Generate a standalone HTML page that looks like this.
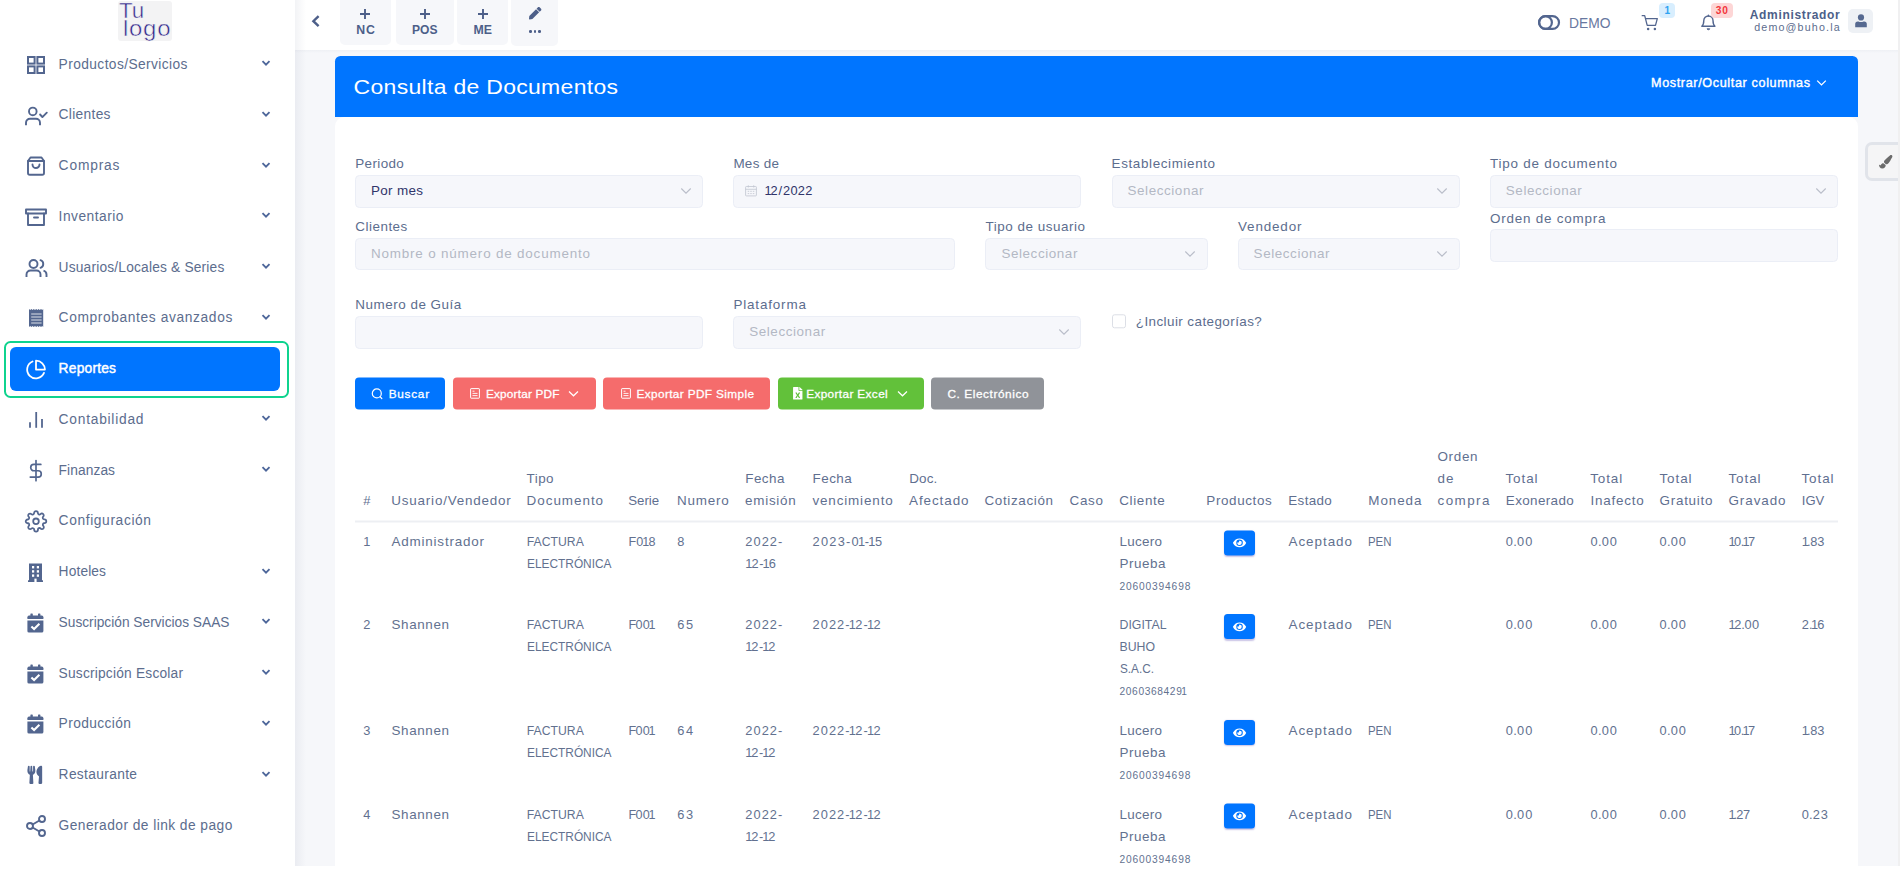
<!DOCTYPE html>
<html lang="es"><head><meta charset="utf-8"><title>Consulta de Documentos</title>
<style>
html,body{margin:0;padding:0;}
body{width:1900px;height:888px;overflow:hidden;background:#fff;font-family:"Liberation Sans",sans-serif;color:#5c6d8e;position:relative;}
.b{position:absolute;box-sizing:border-box;display:block;}
.t{position:absolute;white-space:nowrap;display:block;}
.inp{background:#f6f7fb;border:1px solid #ebeef6;border-radius:4.5px;}
.btn{border-radius:4px;}
.n i{font-style:normal;display:inline;}
svg{overflow:visible;}
</style></head>
<body>
<div class="b" style="left:295px;top:50px;width:1603px;height:816px;background:#f6f7fa;"></div>
<div class="b" style="left:295px;top:0px;width:1603px;height:50px;background:#fff;"></div>
<div class="b" style="left:295px;top:0px;width:11px;height:866px;background:linear-gradient(90deg,rgba(110,120,150,.085),rgba(110,120,150,0));"></div>
<div class="b" style="left:295px;top:50px;width:1603px;height:3px;background:linear-gradient(180deg,rgba(120,130,160,.06),rgba(120,130,160,0));"></div>
<div class="b" style="left:118px;top:1px;width:54px;height:40px;background:#f3f3f4;border-radius:3px;"></div>
<span class="t" style="left:119.00px;top:-4px;font-size:24px;line-height:28px;color:#30268a;-webkit-text-stroke:0.55px #f3f3f4;transform:scale(0.9330,0.9);transform-origin:0 22px;">Tu</span>
<span class="t" style="left:123.00px;top:14px;font-size:24px;line-height:28px;color:#30268a;letter-spacing:0.708px;-webkit-text-stroke:0.55px #f3f3f4;transform:scale(1.0000,0.9);transform-origin:0 22px;">logo</span>
<div class="b" style="left:4px;top:341px;width:285px;height:56.5px;border:2px solid #0fd38e;border-radius:6.5px;"></div>
<div class="b" style="left:10px;top:347px;width:270px;height:43.6px;background:#0075ff;border-radius:6px;"></div>
<svg class="b" style="left:24px;top:52.5px;" width="24" height="24" viewBox="0 0 24 24"><g fill="none" stroke="#53668f" stroke-width="2" stroke-linejoin="miter"><rect x="4" y="4" width="6.6" height="6.6"/><rect x="13.4" y="4" width="6.6" height="6.6"/><rect x="4" y="13.4" width="6.6" height="6.6"/><rect x="13.4" y="13.4" width="6.6" height="6.6"/></g></svg>
<span class="t" style="left:58.60px;top:55px;font-size:13.77px;line-height:20px;color:#5c6d8e;letter-spacing:0.403px;">Productos/Servicios</span>
<svg class="b" style="left:261px;top:59.2px;" width="10" height="8" viewBox="0 0 10 8"><path d="M1.500 2.200L5 5.700l3.500-3.500" fill="none" stroke="#4d669a" stroke-width="1.850"/></svg>
<svg class="b" style="left:24px;top:103.25px;" width="24" height="24" viewBox="0 0 24 24"><g fill="none" stroke="#53668f" stroke-width="1.9" stroke-linejoin="round"><circle cx="8.8" cy="8.45" r="3.8"/><path d="M2 22.2v-2.500a4 4 0 0 1 4-4h6a4 4 0 0 1 4 4v2.500"/><path d="M16.1 11.500l2.300 2.600 4.400-4.400" stroke-linecap="round"/></g></svg>
<span class="t" style="left:58.60px;top:105px;font-size:13.77px;line-height:20px;color:#5c6d8e;letter-spacing:0.310px;">Clientes</span>
<svg class="b" style="left:261px;top:109.95px;" width="10" height="8" viewBox="0 0 10 8"><path d="M1.500 2.200L5 5.700l3.500-3.500" fill="none" stroke="#4d669a" stroke-width="1.850"/></svg>
<svg class="b" style="left:24px;top:154.0px;" width="24" height="24" viewBox="0 0 24 24"><g fill="none" stroke="#53668f" stroke-width="1.9" stroke-linecap="round" stroke-linejoin="round"><path d="M6.5 3.5h11l2.5 3.5v12a1.8 1.8 0 0 1-1.8 1.8H5.8A1.8 1.8 0 0 1 4 19V7z"/><path d="M4 7h16"/><path d="M15.5 10.5a3.5 3.5 0 0 1-7 0"/></g></svg>
<span class="t" style="left:58.60px;top:156px;font-size:13.77px;line-height:20px;color:#5c6d8e;letter-spacing:0.843px;">Compras</span>
<svg class="b" style="left:261px;top:160.7px;" width="10" height="8" viewBox="0 0 10 8"><path d="M1.500 2.200L5 5.700l3.500-3.500" fill="none" stroke="#4d669a" stroke-width="1.850"/></svg>
<svg class="b" style="left:24px;top:204.75px;" width="24" height="24" viewBox="0 0 24 24"><g fill="none" stroke="#53668f" stroke-width="1.9" stroke-linecap="round" stroke-linejoin="round" stroke-linejoin="miter" stroke-linecap="butt"><path d="M2 4.5h20v4H2z"/><path d="M4 8.5V20h16V8.5"/><path d="M10 12.5h4"/></g></svg>
<span class="t" style="left:58.60px;top:207px;font-size:13.77px;line-height:20px;color:#5c6d8e;letter-spacing:0.494px;">Inventario</span>
<svg class="b" style="left:261px;top:211.45px;" width="10" height="8" viewBox="0 0 10 8"><path d="M1.500 2.200L5 5.700l3.500-3.500" fill="none" stroke="#4d669a" stroke-width="1.850"/></svg>
<svg class="b" style="left:24px;top:255.5px;" width="24" height="24" viewBox="0 0 24 24"><g fill="none" stroke="#53668f" stroke-width="1.9" stroke-linecap="round" stroke-linejoin="round"><circle cx="9.5" cy="8" r="4"/><path d="M2.5 21v-2.5a4 4 0 0 1 4-4h6a4 4 0 0 1 4 4V21" stroke-linecap="butt"/><path d="M16.5 4.2a4 4 0 0 1 0 7.6"/><path d="M22.5 21v-2.5a4 4 0 0 0-3-3.8" stroke-linecap="butt"/></g></svg>
<span class="t" style="left:58.60px;top:258px;font-size:13.77px;line-height:20px;color:#5c6d8e;letter-spacing:0.178px;">Usuarios/Locales &amp; Series</span>
<svg class="b" style="left:261px;top:262.2px;" width="10" height="8" viewBox="0 0 10 8"><path d="M1.500 2.200L5 5.700l3.500-3.500" fill="none" stroke="#4d669a" stroke-width="1.850"/></svg>
<svg class="b" style="left:24px;top:306.25px;" width="24" height="24" viewBox="0 0 24 24"><g fill="#53668f"><path d="M5 3l1.2 1 1.2-1 1.2 1 1.2-1 1.2 1 1.2-1 1.2 1 1.2-1 1.2 1 1.2-1 1.2 1 1-1v18l-1-1-1.2 1-1.2-1-1.2 1-1.2-1-1.2 1-1.2-1-1.2 1-1.2-1-1.2 1-1.2-1L5 21z"/></g><g stroke="#fff" stroke-width="1" opacity=".8"><path d="M7.2 8h10.4M7.2 11h10.4M7.2 14h10.4M7.2 17h10.4"/></g></svg>
<span class="t" style="left:58.60px;top:308px;font-size:13.77px;line-height:20px;color:#5c6d8e;letter-spacing:0.619px;">Comprobantes avanzados</span>
<svg class="b" style="left:261px;top:312.95px;" width="10" height="8" viewBox="0 0 10 8"><path d="M1.500 2.200L5 5.700l3.500-3.500" fill="none" stroke="#4d669a" stroke-width="1.850"/></svg>
<svg class="b" style="left:24px;top:357.0px;" width="24" height="24" viewBox="0 0 24 24"><g fill="none" stroke="#fff" stroke-width="1.9" stroke-linecap="round" stroke-linejoin="round" transform="translate(12 12.600) scale(.94) translate(-12 -12)"><path d="M20.500 15.500A9.300 9.300 0 1 1 8.300 3.400"/><path d="M21.500 12A9.500 9.500 0 0 0 12 2.500V12z"/></g></svg>
<span class="t" style="left:58.60px;top:359px;font-size:13.77px;line-height:20px;color:#fff;letter-spacing:0.221px;-webkit-text-stroke:0.45px #fff;">Reportes</span>
<svg class="b" style="left:24px;top:407.75px;" width="24" height="24" viewBox="0 0 24 24"><g fill="none" stroke="#53668f" stroke-width="1.8"><path d="M12.200 19.800V4"/><path d="M18 19.800V11"/><path d="M6 19.800v-5.600"/></g></svg>
<span class="t" style="left:58.60px;top:410px;font-size:13.77px;line-height:20px;color:#5c6d8e;letter-spacing:0.761px;">Contabilidad</span>
<svg class="b" style="left:261px;top:414.45px;" width="10" height="8" viewBox="0 0 10 8"><path d="M1.500 2.200L5 5.700l3.500-3.500" fill="none" stroke="#4d669a" stroke-width="1.850"/></svg>
<svg class="b" style="left:24px;top:458.5px;" width="24" height="24" viewBox="0 0 24 24"><g fill="none" stroke="#53668f" stroke-width="1.9" stroke-linecap="round" stroke-linejoin="round" stroke-linecap="butt" stroke-width="2.200" transform="translate(12 11.600) scale(.88) translate(-12 -12)"><path d="M12 0.500v23"/><path d="M17.500 5H9.600a3.600 3.600 0 0 0 0 7.200h4.800a3.600 3.600 0 0 1 0 7.200H5.500"/></g></svg>
<span class="t" style="left:58.60px;top:461px;font-size:13.77px;line-height:20px;color:#5c6d8e;letter-spacing:0.078px;">Finanzas</span>
<svg class="b" style="left:261px;top:465.2px;" width="10" height="8" viewBox="0 0 10 8"><path d="M1.500 2.200L5 5.700l3.500-3.500" fill="none" stroke="#4d669a" stroke-width="1.850"/></svg>
<svg class="b" style="left:24px;top:509.25px;" width="24" height="24" viewBox="0 0 24 24"><g fill="none" stroke="#53668f" stroke-width="1.9" stroke-linecap="round" stroke-linejoin="round" stroke-width="2.100" transform="translate(12 12.300) scale(.935) translate(-12 -12)"><circle cx="12" cy="12" r="3"/><path d="M19.4 15a1.65 1.65 0 0 0 .33 1.82l.06.06a2 2 0 0 1 0 2.83 2 2 0 0 1-2.83 0l-.06-.06a1.65 1.65 0 0 0-1.82-.33 1.65 1.65 0 0 0-1 1.51V21a2 2 0 0 1-2 2 2 2 0 0 1-2-2v-.09A1.65 1.65 0 0 0 9 19.4a1.65 1.65 0 0 0-1.82.33l-.06.06a2 2 0 0 1-2.83 0 2 2 0 0 1 0-2.83l.06-.06a1.65 1.65 0 0 0 .33-1.82 1.65 1.65 0 0 0-1.51-1H3a2 2 0 0 1-2-2 2 2 0 0 1 2-2h.09A1.65 1.65 0 0 0 4.6 9a1.65 1.65 0 0 0-.33-1.82l-.06-.06a2 2 0 0 1 0-2.83 2 2 0 0 1 2.83 0l.06.06a1.65 1.65 0 0 0 1.82.33H9a1.65 1.65 0 0 0 1-1.51V3a2 2 0 0 1 2-2 2 2 0 0 1 2 2v.09a1.65 1.65 0 0 0 1 1.51 1.65 1.65 0 0 0 1.82-.33l.06-.06a2 2 0 0 1 2.83 0 2 2 0 0 1 0 2.83l-.06.06a1.65 1.65 0 0 0-.33 1.82V9a1.65 1.65 0 0 0 1.51 1H21a2 2 0 0 1 2 2 2 2 0 0 1-2 2h-.09a1.65 1.65 0 0 0-1.51 1z"/></g></svg>
<span class="t" style="left:58.60px;top:511px;font-size:13.77px;line-height:20px;color:#5c6d8e;letter-spacing:0.622px;">Configuración</span>
<svg class="b" style="left:24px;top:560.0px;" width="24" height="24" viewBox="0 0 24 24"><g fill="#53668f"><path d="M4 20.2h1V3.5h13v16.7h1V22H4z"/></g><g fill="#fff"><rect x="8" y="6" width="2.2" height="2.4"/><rect x="12.8" y="6" width="2.2" height="2.4"/><rect x="8" y="10.2" width="2.2" height="2.4"/><rect x="12.8" y="10.2" width="2.2" height="2.4"/><rect x="8" y="14.4" width="2.2" height="2.4"/><rect x="12.8" y="14.4" width="2.2" height="2.4"/><rect x="10.4" y="18.6" width="2.2" height="3.4"/></g></svg>
<span class="t" style="left:58.60px;top:562px;font-size:13.77px;line-height:20px;color:#5c6d8e;letter-spacing:0.121px;">Hoteles</span>
<svg class="b" style="left:261px;top:566.7px;" width="10" height="8" viewBox="0 0 10 8"><path d="M1.500 2.200L5 5.700l3.500-3.500" fill="none" stroke="#4d669a" stroke-width="1.850"/></svg>
<svg class="b" style="left:24px;top:610.75px;" width="24" height="24" viewBox="0 0 24 24"><g transform="translate(-.6 0)"><g fill="#53668f"><path d="M4 9.6h16V20a1.6 1.6 0 0 1-1.6 1.6H5.6A1.6 1.6 0 0 1 4 20z"/><path d="M5.6 4.6h12.8A1.6 1.6 0 0 1 20 6.2v1.9H4V6.2a1.6 1.6 0 0 1 1.6-1.6z"/><rect x="7" y="2.4" width="2.4" height="4" rx=".6"/><rect x="14.6" y="2.4" width="2.4" height="4" rx=".6"/></g><path d="M8 15.4l2.7 2.7 5.3-5.3" fill="none" stroke="#fff" stroke-width="2.1"/></g></svg>
<span class="t" style="left:58.60px;top:613px;font-size:13.73px;line-height:20px;color:#5c6d8e;letter-spacing:0.004px;">Suscripción Servicios SAAS</span>
<svg class="b" style="left:261px;top:617.45px;" width="10" height="8" viewBox="0 0 10 8"><path d="M1.500 2.200L5 5.700l3.500-3.500" fill="none" stroke="#4d669a" stroke-width="1.850"/></svg>
<svg class="b" style="left:24px;top:661.5px;" width="24" height="24" viewBox="0 0 24 24"><g transform="translate(-.6 0)"><g fill="#53668f"><path d="M4 9.6h16V20a1.6 1.6 0 0 1-1.6 1.6H5.6A1.6 1.6 0 0 1 4 20z"/><path d="M5.6 4.6h12.8A1.6 1.6 0 0 1 20 6.2v1.9H4V6.2a1.6 1.6 0 0 1 1.6-1.6z"/><rect x="7" y="2.4" width="2.4" height="4" rx=".6"/><rect x="14.6" y="2.4" width="2.4" height="4" rx=".6"/></g><path d="M8 15.4l2.7 2.7 5.3-5.3" fill="none" stroke="#fff" stroke-width="2.1"/></g></svg>
<span class="t" style="left:58.60px;top:664px;font-size:13.77px;line-height:20px;color:#5c6d8e;letter-spacing:0.196px;">Suscripción Escolar</span>
<svg class="b" style="left:261px;top:668.2px;" width="10" height="8" viewBox="0 0 10 8"><path d="M1.500 2.200L5 5.700l3.500-3.500" fill="none" stroke="#4d669a" stroke-width="1.850"/></svg>
<svg class="b" style="left:24px;top:712.25px;" width="24" height="24" viewBox="0 0 24 24"><g transform="translate(-.6 0)"><g fill="#53668f"><path d="M4 9.6h16V20a1.6 1.6 0 0 1-1.6 1.6H5.6A1.6 1.6 0 0 1 4 20z"/><path d="M5.6 4.6h12.8A1.6 1.6 0 0 1 20 6.2v1.9H4V6.2a1.6 1.6 0 0 1 1.6-1.6z"/><rect x="7" y="2.4" width="2.4" height="4" rx=".6"/><rect x="14.6" y="2.4" width="2.4" height="4" rx=".6"/></g><path d="M8 15.4l2.7 2.7 5.3-5.3" fill="none" stroke="#fff" stroke-width="2.1"/></g></svg>
<span class="t" style="left:58.60px;top:714px;font-size:13.77px;line-height:20px;color:#5c6d8e;letter-spacing:0.392px;">Producción</span>
<svg class="b" style="left:261px;top:718.95px;" width="10" height="8" viewBox="0 0 10 8"><path d="M1.500 2.200L5 5.700l3.500-3.500" fill="none" stroke="#4d669a" stroke-width="1.850"/></svg>
<svg class="b" style="left:24px;top:763.0px;" width="24" height="24" viewBox="0 0 24 24"><g transform="translate(3.400 2.800) scale(.0355)"><path fill="#53668f" d="M207.9 15.2c.8 4.7 16.1 94.5 16.1 128.8 0 52.3-27.8 89.6-68.900 104.600L168 486.700c.7 13.700-10.200 25.300-24 25.300H80c-13.700 0-24.700-11.500-24-25.300l12.900-238.100C27.700 233.600 0 196.200 0 144 0 109.600 15.300 19.900 16.100 15.200 19.300-5.100 61.400-5.400 64 16.300v141.200c1.300 3.400 15.100 3.200 16 0 1.400-25.300 7.900-139.200 8-141.800 3.300-20.800 44.700-20.800 47.900 0 .2 2.700 6.600 116.500 8 141.800.9 3.200 14.800 3.400 16 0V16.300c2.600-21.600 44.800-21.400 48-1.100zm119.200 285.700l-15 185.100c-1.200 14 9.900 26 23.900 26h56c13.300 0 24-10.700 24-24V24c0-13.200-10.700-24-24-24-82.500 0-221.400 178.500-64.900 300.900z"/></g></svg>
<span class="t" style="left:58.60px;top:765px;font-size:13.77px;line-height:20px;color:#5c6d8e;letter-spacing:0.341px;">Restaurante</span>
<svg class="b" style="left:261px;top:769.7px;" width="10" height="8" viewBox="0 0 10 8"><path d="M1.500 2.200L5 5.700l3.500-3.500" fill="none" stroke="#4d669a" stroke-width="1.850"/></svg>
<svg class="b" style="left:24px;top:813.75px;" width="24" height="24" viewBox="0 0 24 24"><g fill="none" stroke="#53668f" stroke-width="1.9" stroke-linecap="round" stroke-linejoin="round"><circle cx="18" cy="5" r="3"/><circle cx="6" cy="12" r="3"/><circle cx="18" cy="19" r="3"/><path d="M8.6 13.5l6.8 4M15.4 6.5l-6.8 4"/></g></svg>
<span class="t" style="left:58.60px;top:816px;font-size:13.77px;line-height:20px;color:#5c6d8e;letter-spacing:0.445px;">Generador de link de pago</span>
<svg class="b" style="left:310px;top:14px;" width="12" height="14" viewBox="0 0 12 14"><path d="M8.6 2.2L3.4 7.2l5.2 5" fill="none" stroke="#4d5f89" stroke-width="2.4"/></svg>
<div class="b" style="left:340px;top:0px;width:50.75px;height:45px;background:#f6f7fa;border-radius:0 0 5px 5px;"></div>
<svg class="b" style="left:359.375px;top:7.75px;" width="12" height="12" viewBox="0 0 12 12"><path d="M6 1v10M1 6h10" fill="none" stroke="#4d5f89" stroke-width="1.9"/></svg>
<span class="t" style="left:356.20px;top:22px;font-size:12.3px;line-height:16px;font-weight:700;color:#4d5f89;letter-spacing:1.039px;">NC</span>
<div class="b" style="left:396px;top:0px;width:57.75px;height:45px;background:#f6f7fa;border-radius:0 0 5px 5px;"></div>
<svg class="b" style="left:418.875px;top:7.75px;" width="12" height="12" viewBox="0 0 12 12"><path d="M6 1v10M1 6h10" fill="none" stroke="#4d5f89" stroke-width="1.9"/></svg>
<span class="t" style="left:412.00px;top:22px;font-size:12.3px;line-height:16px;font-weight:700;color:#4d5f89;transform:scaleX(0.9819);transform-origin:0 50%;">POS</span>
<div class="b" style="left:457.2px;top:0px;width:50.80000000000001px;height:45px;background:#f6f7fa;border-radius:0 0 5px 5px;"></div>
<svg class="b" style="left:476.6px;top:7.75px;" width="12" height="12" viewBox="0 0 12 12"><path d="M6 1v10M1 6h10" fill="none" stroke="#4d5f89" stroke-width="1.9"/></svg>
<span class="t" style="left:473.50px;top:22px;font-size:12.3px;line-height:16px;font-weight:700;color:#4d5f89;letter-spacing:0.055px;">ME</span>
<div class="b" style="left:511.2px;top:0px;width:46.6px;height:45.5px;background:#f6f7fa;border-radius:0 0 5px 5px;"></div>
<svg class="b" style="left:528.8px;top:7.3px;" width="12.4" height="12.4" viewBox="0 0 512 512"><path fill="#4d5f89" d="M290.7 93.2l128 128L140.8 499.300 26.700 511.900c-15.300 1.700-28.200-11.200-26.500-26.500l12.700-114.200zm207.200-19.100l-60.100-60.100c-18.750-18.750-49.160-18.750-67.910 0l-56.550 56.550 128.020 128.020 56.550-56.550c18.750-18.760 18.750-49.160 0-67.920z"/></svg>
<div class="b" style="left:529.2px;top:30.2px;width:2.7px;height:2.7px;background:#4d5f89;border-radius:50%;"></div>
<div class="b" style="left:533.6px;top:30.2px;width:2.7px;height:2.7px;background:#4d5f89;border-radius:50%;"></div>
<div class="b" style="left:538.0px;top:30.2px;width:2.7px;height:2.7px;background:#4d5f89;border-radius:50%;"></div>
<svg class="b" style="left:1538px;top:15px;" width="23" height="15" viewBox="0 0 23 15"><rect x="1.1" y="1.1" width="19.9" height="12.8" rx="6.4" fill="none" stroke="#53668f" stroke-width="2.2"/><circle cx="7.500" cy="7.500" r="6.4" fill="none" stroke="#53668f" stroke-width="2.2"/></svg>
<span class="t" style="left:1569.20px;top:13px;font-size:14.6px;line-height:20px;color:#6878a0;transform:scaleX(0.9479);transform-origin:0 50%;">DEMO</span>
<svg class="b" style="left:1641px;top:14px;" width="19" height="18" viewBox="0 0 19 18"><g fill="none" stroke="#53668f" stroke-width="1.3" stroke-linejoin="round" stroke-linecap="round"><path d="M1.200 1.700h2.500l2.500 9.600h8.300l1.800-6.700H4.600"/></g><circle cx="7.100" cy="15" r="1.250" fill="#53668f"/><circle cx="13.900" cy="15" r="1.250" fill="#53668f"/></svg>
<div class="b" style="left:1659px;top:3px;width:16px;height:15px;background:#d8eefe;border-radius:4px;"></div>
<span class="t" style="left:1664.60px;top:5px;font-size:10px;line-height:12px;font-weight:700;color:#2fa2f2;">1</span>
<svg class="b" style="left:1700px;top:14px;" width="17" height="18" viewBox="0 0 17 18"><g fill="none" stroke="#53668f" stroke-width="1.400" stroke-linejoin="round" stroke-linecap="round"><path d="M8.400 2a4.600 4.600 0 0 1 4.600 4.600c0 4.100 2 5.600 2 5.600H1.800s2-1.500 2-5.600A4.600 4.600 0 0 1 8.400 2z"/><path d="M8.400 2V1.200"/></g><path d="M7 14.800a1.500 1.500 0 0 0 2.800 0z" fill="#53668f" stroke="#53668f" stroke-width=".9"/></svg>
<div class="b" style="left:1711px;top:3px;width:22px;height:15px;background:#fdd6d6;border-radius:4px;"></div>
<span class="t" style="left:1715.80px;top:5px;font-size:10.2px;line-height:12px;font-weight:700;color:#f2363c;letter-spacing:0.668px;">30</span>
<span class="t" style="left:1749.80px;top:7px;font-size:12px;line-height:16px;font-weight:700;color:#4d5f89;letter-spacing:0.658px;">Administrador</span>
<span class="t" style="left:1754.20px;top:20px;font-size:10.7px;line-height:14px;color:#5c6d8e;letter-spacing:1.168px;">demo@buho.la</span>
<div class="b" style="left:1848px;top:9px;width:25px;height:24px;background:#eef1f5;border-radius:5px;"></div>
<svg class="b" style="left:1854.5px;top:13.5px;" width="12" height="13.5" viewBox="0 0 12 13.5"><circle cx="6" cy="3.400" r="3.100" fill="#566990"/><path d="M0.200 13.300v-3.300a2.600 2.600 0 0 1 2.600-2.600h.6c.8.400 1.700.600 2.600.600s1.800-.2 2.600-.6h.6a2.600 2.600 0 0 1 2.600 2.600v3.300z" fill="#566990"/></svg>
<div class="b" style="left:335px;top:56px;width:1523px;height:61px;background:#0075ff;border-radius:5.5px 5.5px 0 0;"></div>
<span class="t" style="left:353.60px;top:71px;font-size:23px;line-height:30px;color:#fff;letter-spacing:0.293px;transform:scale(1.0000,0.915);transform-origin:0 23px;">Consulta de Documentos</span>
<span class="t" style="left:1651.00px;top:75px;font-size:12.63px;line-height:16px;color:#fff;letter-spacing:0.629px;-webkit-text-stroke:0.4px #fff;">Mostrar/Ocultar columnas</span>
<svg class="b" style="left:1816px;top:79px;" width="11" height="8" viewBox="0 0 11 8"><path d="M1.200 1.600L5.500 5.900l4.300-4.300" fill="none" stroke="#fff" stroke-width="1.300"/></svg>
<div class="b" style="left:335px;top:117px;width:1523px;height:749px;background:#fff;border-radius:9.5px 9.5px 0 0;"></div>
<div class="b" style="left:1865px;top:142px;width:33px;height:39px;background:#f5f5f6;border:3px solid #e1e4ea;border-right:0;border-radius:7px 0 0 7px;"></div>
<svg class="b" style="left:1878.8px;top:154.5px;" width="13.4" height="13.6" viewBox="0 0 512 512"><path fill="#6b6b6b" d="M167.020 309.340c-40.120 2.580-76.530 17.860-97.190 72.300-2.350 6.210-8 9.980-14.590 9.980-11.110 0-45.460-27.670-55.250-34.350C0 439.620 37.930 512 128 512c75.860 0 128-43.770 128-120.190 0-3.110-.65-6.080-.97-9.130l-88.010-73.340zM457.890 0c-15.160 0-29.370 6.710-40.210 16.450C213.270 199.050 192 203.340 192 257.090c0 13.700 3.250 26.760 8.730 38.700l63.820 53.180c7.210 1.800 14.640 3.030 22.390 3.030 62.110 0 98.110-45.470 211.160-256.460 7.380-14.350 13.900-29.850 13.900-45.990C512 20.640 486 0 457.890 0z"/></svg>
<span class="t" style="left:355.30px;top:155px;font-size:13.45px;line-height:18px;color:#5c6d8e;letter-spacing:0.364px;">Periodo</span>
<div class="b inp" style="left:355px;top:175px;width:348.2px;height:33px;"></div>
<span class="t" style="left:371.00px;top:182px;font-size:13.45px;line-height:18px;color:#30356a;letter-spacing:0.328px;">Por mes</span>
<svg class="b" style="left:679.7px;top:187px;" width="12" height="8" viewBox="0 0 12 8"><path d="M1.300 1.500L6 6.200l4.700-4.700" fill="none" stroke="#b9bdc9" stroke-width="1.100"/></svg>
<span class="t" style="left:733.40px;top:155px;font-size:13.45px;line-height:18px;color:#5c6d8e;letter-spacing:0.287px;">Mes de</span>
<div class="b inp" style="left:733.2px;top:175px;width:348.3px;height:33px;"></div>
<svg class="b" style="left:744.8px;top:184.9px;" width="12" height="11.5" viewBox="0 0 12 11.500"><g fill="none" stroke="#c3c7d2" stroke-width=".85"><rect x=".6" y="1.500" width="10.800" height="9.400" rx=".7"/><path d="M.6 4.300h10.800M3.300 .3v2.200M8.700 .3v2.200"/></g><g fill="#cfd2db"><rect x="2.700" y="5.800" width="1.500" height="1.100"/><rect x="5.250" y="5.800" width="1.500" height="1.100"/><rect x="7.800" y="5.800" width="1.500" height="1.100"/><rect x="2.700" y="8" width="1.500" height="1.100"/><rect x="5.250" y="8" width="1.500" height="1.100"/><rect x="7.800" y="8" width="1.500" height="1.100"/></g></svg>
<span class="t n" style="left:765.99px;top:182px;font-size:12.8px;line-height:18px;color:#30356a;"><i style="margin:0 -1.39px">1</i><i style="margin:0 0.15px">2</i><i style="margin:0 0.78px">/</i><i style="margin:0 0.15px">2</i><i style="margin:0 0.15px">0</i><i style="margin:0 0.15px">2</i><i style="margin:0 0.15px">2</i></span>
<span class="t" style="left:1111.60px;top:155px;font-size:13.45px;line-height:18px;color:#5c6d8e;letter-spacing:0.617px;">Establecimiento</span>
<div class="b inp" style="left:1111.5px;top:175px;width:348.2px;height:33px;"></div>
<span class="t" style="left:1127.50px;top:182px;font-size:13.45px;line-height:18px;color:#b3b8c4;letter-spacing:0.579px;">Seleccionar</span>
<svg class="b" style="left:1436.2px;top:187px;" width="12" height="8" viewBox="0 0 12 8"><path d="M1.300 1.500L6 6.200l4.700-4.700" fill="none" stroke="#b9bdc9" stroke-width="1.100"/></svg>
<span class="t" style="left:1490.00px;top:155px;font-size:13.45px;line-height:18px;color:#5c6d8e;letter-spacing:0.779px;">Tipo de documento</span>
<div class="b inp" style="left:1489.8px;top:175px;width:348.2px;height:33px;"></div>
<span class="t" style="left:1505.80px;top:182px;font-size:13.45px;line-height:18px;color:#b3b8c4;letter-spacing:0.579px;">Seleccionar</span>
<svg class="b" style="left:1814.5px;top:187px;" width="12" height="8" viewBox="0 0 12 8"><path d="M1.300 1.500L6 6.200l4.700-4.700" fill="none" stroke="#b9bdc9" stroke-width="1.100"/></svg>
<span class="t" style="left:355.30px;top:218px;font-size:13.45px;line-height:18px;color:#5c6d8e;letter-spacing:0.493px;">Clientes</span>
<div class="b inp" style="left:355px;top:238px;width:600px;height:32px;"></div>
<span class="t" style="left:371.00px;top:245px;font-size:13.45px;line-height:18px;color:#b3b8c4;letter-spacing:0.808px;">Nombre o número de documento</span>
<span class="t" style="left:985.60px;top:218px;font-size:13.45px;line-height:18px;color:#5c6d8e;letter-spacing:0.527px;">Tipo de usuario</span>
<div class="b inp" style="left:985.4px;top:238px;width:222.2px;height:32px;"></div>
<span class="t" style="left:1001.40px;top:245px;font-size:13.45px;line-height:18px;color:#b3b8c4;letter-spacing:0.579px;">Seleccionar</span>
<svg class="b" style="left:1184.1px;top:250px;" width="12" height="8" viewBox="0 0 12 8"><path d="M1.300 1.500L6 6.200l4.700-4.700" fill="none" stroke="#b9bdc9" stroke-width="1.100"/></svg>
<span class="t" style="left:1238.00px;top:218px;font-size:13.45px;line-height:18px;color:#5c6d8e;letter-spacing:0.852px;">Vendedor</span>
<div class="b inp" style="left:1237.6px;top:238px;width:222.2px;height:32px;"></div>
<span class="t" style="left:1253.60px;top:245px;font-size:13.45px;line-height:18px;color:#b3b8c4;letter-spacing:0.579px;">Seleccionar</span>
<svg class="b" style="left:1436.3px;top:250px;" width="12" height="8" viewBox="0 0 12 8"><path d="M1.300 1.500L6 6.200l4.700-4.700" fill="none" stroke="#b9bdc9" stroke-width="1.100"/></svg>
<span class="t" style="left:1490.00px;top:210px;font-size:13.45px;line-height:18px;color:#5c6d8e;letter-spacing:0.781px;">Orden de compra</span>
<div class="b inp" style="left:1489.8px;top:229px;width:348.2px;height:33px;"></div>
<span class="t" style="left:355.30px;top:296px;font-size:13.45px;line-height:18px;color:#5c6d8e;letter-spacing:0.512px;">Numero de Guía</span>
<div class="b inp" style="left:355px;top:316px;width:348.2px;height:33px;"></div>
<span class="t" style="left:733.40px;top:296px;font-size:13.45px;line-height:18px;color:#5c6d8e;letter-spacing:0.836px;">Plataforma</span>
<div class="b inp" style="left:733.2px;top:316px;width:348.3px;height:33px;"></div>
<span class="t" style="left:749.20px;top:323px;font-size:13.45px;line-height:18px;color:#b3b8c4;letter-spacing:0.579px;">Seleccionar</span>
<svg class="b" style="left:1058.0px;top:328px;" width="12" height="8" viewBox="0 0 12 8"><path d="M1.300 1.500L6 6.200l4.700-4.700" fill="none" stroke="#b9bdc9" stroke-width="1.100"/></svg>
<div class="b" style="left:1112px;top:314px;width:14px;height:14px;background:#fff;border:1px solid #dcdfe6;border-radius:2.5px;transform:translateY(.3px);"></div>
<span class="t" style="left:1135.80px;top:313px;font-size:13.45px;line-height:18px;color:#5c6d8e;letter-spacing:0.421px;">¿Incluir categorías?</span>
<div class="b btn" style="left:355.2px;top:377px;width:89.8px;height:32.2px;background:#0075ff;transform:translateY(.5px);"></div>
<svg class="b" style="left:371px;top:388px;" width="12" height="12" viewBox="0 0 12 12"><g fill="none" stroke="#fff" stroke-width="1.200"><circle cx="5.800" cy="5.400" r="4.500"/><path d="M9 8.700l1.800 1.800" stroke-linecap="round"/></g></svg>
<span class="t" style="left:388.70px;top:386px;font-size:11.8px;line-height:16px;color:#fff;letter-spacing:0.737px;-webkit-text-stroke:0.3px #fff;">Buscar</span>
<div class="b btn" style="left:453px;top:377px;width:143px;height:32.2px;background:#f56c6c;transform:translateY(.5px);"></div>
<svg class="b" style="left:470px;top:388.2px;" width="10" height="11" viewBox="0 0 10 11"><g fill="none" stroke="#fff" stroke-width="1"><rect x=".6" y=".6" width="8.800" height="9.600" rx=".5"/><path d="M2.500 3.200h2M2.500 5.400h5M2.500 7.600h5" stroke-width=".9"/></g></svg>
<span class="t" style="left:486.00px;top:386px;font-size:11.8px;line-height:16px;color:#fff;letter-spacing:0.177px;-webkit-text-stroke:0.3px #fff;">Exportar PDF</span>
<svg class="b" style="left:568.2px;top:389.8px;" width="11" height="8" viewBox="0 0 11 8"><path d="M1 1.500L5.500 5.800l4.500-4.300" fill="none" stroke="#fff" stroke-width="1.200"/></svg>
<div class="b btn" style="left:603px;top:377px;width:166.7px;height:32.2px;background:#f56c6c;transform:translateY(.5px);"></div>
<svg class="b" style="left:620.5px;top:388.2px;" width="10" height="11" viewBox="0 0 10 11"><g fill="none" stroke="#fff" stroke-width="1"><rect x=".6" y=".6" width="8.800" height="9.600" rx=".5"/><path d="M2.500 3.200h2M2.500 5.400h5M2.500 7.600h5" stroke-width=".9"/></g></svg>
<span class="t" style="left:636.50px;top:386px;font-size:11.8px;line-height:16px;color:#fff;letter-spacing:0.373px;-webkit-text-stroke:0.3px #fff;">Exportar PDF Simple</span>
<div class="b btn" style="left:778px;top:377px;width:145.7px;height:32.2px;background:#62c13a;transform:translateY(.5px);"></div>
<svg class="b" style="left:792.8px;top:387.2px;" width="9.5" height="12.5" viewBox="0 0 384 512"><path fill="#fff" d="M224 136V0H24C10.700 0 0 10.700 0 24v464c0 13.300 10.700 24 24 24h336c13.300 0 24-10.700 24-24V160H248c-13.200 0-24-10.800-24-24zm60.100 106.500L224 336l60.100 93.500c5.100 8-.6 18.500-10.100 18.500h-34.900c-4.400 0-8.500-2.400-10.600-6.300C208.900 405.500 192 373 192 373c-6.400 14.800-10 20-36.600 68.800-2.100 3.900-6.100 6.300-10.500 6.300H110c-9.500 0-15.200-10.500-10.100-18.500l60.300-93.500-60.300-93.500c-5.200-8 .6-18.500 10.100-18.500h34.800c4.400 0 8.500 2.400 10.600 6.300 26.100 48.800 20 33.600 36.600 68.500 0 0 6.100-11.700 36.600-68.500 2.100-3.900 6.200-6.300 10.600-6.300H274c9.500-.1 15.200 10.400 10.100 18.400zM384 121.900v6.100H256V0h6.100c6.400 0 12.500 2.500 17 7l97.900 98c4.500 4.500 7 10.600 7 16.900z"/></svg>
<span class="t" style="left:806.20px;top:386px;font-size:11.8px;line-height:16px;color:#fff;letter-spacing:0.369px;-webkit-text-stroke:0.3px #fff;">Exportar Excel</span>
<svg class="b" style="left:896.5px;top:389.8px;" width="11" height="8" viewBox="0 0 11 8"><path d="M1 1.500L5.500 5.800l4.500-4.300" fill="none" stroke="#fff" stroke-width="1.200"/></svg>
<div class="b btn" style="left:931px;top:377px;width:112.5px;height:32.2px;background:#909399;transform:translateY(.5px);"></div>
<span class="t" style="left:947.50px;top:386px;font-size:11.8px;line-height:16px;color:#fff;letter-spacing:0.582px;-webkit-text-stroke:0.3px #fff;">C. Electrónico</span>
<span class="t" style="left:363.30px;top:492px;font-size:13px;line-height:18px;color:#5f6f90;">#</span>
<span class="t" style="left:391.30px;top:492px;font-size:13.45px;line-height:18px;color:#5f6f90;letter-spacing:0.795px;">Usuario/Vendedor</span>
<span class="t" style="left:526.60px;top:470px;font-size:13.45px;line-height:18px;color:#5f6f90;letter-spacing:0.453px;">Tipo</span>
<span class="t" style="left:526.60px;top:492px;font-size:13.45px;line-height:18px;color:#5f6f90;letter-spacing:0.973px;">Documento</span>
<span class="t" style="left:628.20px;top:492px;font-size:13.28px;line-height:18px;color:#5f6f90;letter-spacing:0.008px;">Serie</span>
<span class="t" style="left:677.00px;top:492px;font-size:13.45px;line-height:18px;color:#5f6f90;letter-spacing:0.801px;">Numero</span>
<span class="t" style="left:745.20px;top:470px;font-size:13.45px;line-height:18px;color:#5f6f90;letter-spacing:0.488px;">Fecha</span>
<span class="t" style="left:745.00px;top:492px;font-size:13.45px;line-height:18px;color:#5f6f90;letter-spacing:0.749px;">emisión</span>
<span class="t" style="left:812.50px;top:470px;font-size:13.45px;line-height:18px;color:#5f6f90;letter-spacing:0.488px;">Fecha</span>
<span class="t" style="left:812.40px;top:492px;font-size:13.45px;line-height:18px;color:#5f6f90;letter-spacing:0.860px;">vencimiento</span>
<span class="t" style="left:909.30px;top:470px;font-size:13.45px;line-height:18px;color:#5f6f90;letter-spacing:0.123px;">Doc.</span>
<span class="t" style="left:909.00px;top:492px;font-size:13.45px;line-height:18px;color:#5f6f90;letter-spacing:0.923px;">Afectado</span>
<span class="t" style="left:984.50px;top:492px;font-size:13.45px;line-height:18px;color:#5f6f90;letter-spacing:0.640px;">Cotización</span>
<span class="t" style="left:1069.50px;top:492px;font-size:13.45px;line-height:18px;color:#5f6f90;letter-spacing:0.710px;">Caso</span>
<span class="t" style="left:1119.30px;top:492px;font-size:13.45px;line-height:18px;color:#5f6f90;letter-spacing:0.612px;">Cliente</span>
<span class="t" style="left:1206.30px;top:492px;font-size:13.45px;line-height:18px;color:#5f6f90;letter-spacing:0.625px;">Productos</span>
<span class="t" style="left:1288.30px;top:492px;font-size:13.45px;line-height:18px;color:#5f6f90;letter-spacing:0.333px;">Estado</span>
<span class="t" style="left:1368.30px;top:492px;font-size:13.45px;line-height:18px;color:#5f6f90;letter-spacing:0.928px;">Moneda</span>
<span class="t" style="left:1437.50px;top:448px;font-size:13.45px;line-height:18px;color:#5f6f90;letter-spacing:0.663px;">Orden</span>
<span class="t" style="left:1437.50px;top:470px;font-size:13.45px;line-height:18px;color:#5f6f90;letter-spacing:1.053px;">de</span>
<span class="t" style="left:1437.50px;top:492px;font-size:13.45px;line-height:18px;color:#5f6f90;letter-spacing:1.439px;">compra</span>
<span class="t" style="left:1505.50px;top:470px;font-size:13.45px;line-height:18px;color:#5f6f90;letter-spacing:0.904px;">Total</span>
<span class="t" style="left:1505.80px;top:492px;font-size:13.45px;line-height:18px;color:#5f6f90;letter-spacing:0.375px;">Exonerado</span>
<span class="t" style="left:1590.20px;top:470px;font-size:13.45px;line-height:18px;color:#5f6f90;letter-spacing:0.904px;">Total</span>
<span class="t" style="left:1590.50px;top:492px;font-size:13.45px;line-height:18px;color:#5f6f90;letter-spacing:0.770px;">Inafecto</span>
<span class="t" style="left:1659.50px;top:470px;font-size:13.45px;line-height:18px;color:#5f6f90;letter-spacing:0.904px;">Total</span>
<span class="t" style="left:1659.50px;top:492px;font-size:13.45px;line-height:18px;color:#5f6f90;letter-spacing:0.743px;">Gratuito</span>
<span class="t" style="left:1728.50px;top:470px;font-size:13.45px;line-height:18px;color:#5f6f90;letter-spacing:0.904px;">Total</span>
<span class="t" style="left:1728.50px;top:492px;font-size:13.45px;line-height:18px;color:#5f6f90;letter-spacing:0.910px;">Gravado</span>
<span class="t" style="left:1801.50px;top:470px;font-size:13.45px;line-height:18px;color:#5f6f90;letter-spacing:0.904px;">Total</span>
<span class="t" style="left:1801.80px;top:492px;font-size:13.06px;line-height:18px;color:#5f6f90;letter-spacing:0.012px;">IGV</span>
<div class="b" style="left:355px;top:520px;width:1483px;height:2px;background:#edeff3;transform:translateY(.5px);"></div>
<span class="t n" style="left:363.30px;top:533px;font-size:12.8px;line-height:18px;color:#62718f;"><i style="margin:0 0.00px">1</i></span>
<span class="t" style="left:391.50px;top:533px;font-size:13.45px;line-height:18px;color:#62718f;letter-spacing:0.800px;">Administrador</span>
<span class="t" style="left:526.80px;top:533px;font-size:12.21px;line-height:18px;color:#62718f;letter-spacing:0.008px;">FACTURA</span>
<span class="t" style="left:526.80px;top:555px;font-size:11.96px;line-height:18px;color:#62718f;transform:scaleX(0.9940);transform-origin:0 50%;">ELECTRÓNICA</span>
<span class="t n" style="left:628.77px;top:533px;font-size:12.6px;line-height:18px;color:#62718f;"><i style="margin:0 -0.37px">F</i><i style="margin:0 0.38px">0</i><i style="margin:0 -1.24px">1</i><i style="margin:0 0.38px">8</i></span>
<span class="t n" style="left:677.20px;top:533px;font-size:12.8px;line-height:18px;color:#62718f;"><i style="margin:0 0.00px">8</i></span>
<span class="t n" style="left:744.76px;top:533px;font-size:12.8px;line-height:18px;color:#62718f;"><i style="margin:0 0.54px">2</i><i style="margin:0 0.54px">0</i><i style="margin:0 0.54px">2</i><i style="margin:0 0.54px">2</i><i style="margin:0 0.49px">-</i></span>
<span class="t n" style="left:746.59px;top:555px;font-size:12.8px;line-height:18px;color:#62718f;"><i style="margin:0 -1.29px">1</i><i style="margin:0 0.32px">2</i><i style="margin:0 0.35px">-</i><i style="margin:0 -1.29px">1</i><i style="margin:0 0.32px">6</i></span>
<span class="t n" style="left:811.97px;top:533px;font-size:12.8px;line-height:18px;color:#62718f;"><i style="margin:0 0.63px">2</i><i style="margin:0 0.63px">0</i><i style="margin:0 0.63px">2</i><i style="margin:0 0.63px">3</i><i style="margin:0 0.55px">-</i><i style="margin:0 0.63px">0</i><i style="margin:0 -1.11px">1</i><i style="margin:0 0.55px">-</i><i style="margin:0 -1.11px">1</i><i style="margin:0 0.63px">5</i></span>
<span class="t" style="left:1119.50px;top:533px;font-size:13.45px;line-height:18px;color:#62718f;letter-spacing:0.283px;">Lucero</span>
<span class="t" style="left:1119.50px;top:555px;font-size:13.45px;line-height:18px;color:#62718f;letter-spacing:0.534px;">Prueba</span>
<span class="t n" style="left:1119.07px;top:578px;font-size:10.2px;line-height:18px;color:#62718f;"><i style="margin:0 0.43px">2</i><i style="margin:0 0.43px">0</i><i style="margin:0 0.43px">6</i><i style="margin:0 0.43px">0</i><i style="margin:0 0.43px">0</i><i style="margin:0 0.43px">3</i><i style="margin:0 0.43px">9</i><i style="margin:0 0.43px">4</i><i style="margin:0 0.43px">6</i><i style="margin:0 0.43px">9</i><i style="margin:0 0.43px">8</i></span>
<div class="b" style="left:1224px;top:530px;width:31px;height:25.1px;background:#0075ff;border-radius:3.5px;box-shadow:0 1px 1.5px rgba(60,40,160,.28);transform:translateY(0.6px);"></div>
<svg class="b" style="left:1232.9px;top:537.2px;" width="13.1" height="11.64" viewBox="0 0 576 512"><path fill="#fff" d="M572.52 241.4C518.29 135.59 410.93 64 288 64S57.68 135.64 3.48 241.41a32.35 32.35 0 0 0 0 29.19C57.71 376.41 165.07 448 288 448s230.32-71.64 284.52-177.41a32.35 32.35 0 0 0 0-29.19zM288 400a144 144 0 1 1 144-144 143.93 143.93 0 0 1-144 144zm0-240a95.31 95.31 0 0 0-25.31 3.79 47.85 47.85 0 0 1-66.9 66.9A95.78 95.78 0 1 0 288 160z"/></svg>
<span class="t" style="left:1288.50px;top:533px;font-size:13.45px;line-height:18px;color:#62718f;letter-spacing:0.960px;">Aceptado</span>
<span class="t" style="left:1368.30px;top:533px;font-size:11.96px;line-height:18px;color:#62718f;transform:scaleX(0.9562);transform-origin:0 50%;">PEN</span>
<span class="t n" style="left:1505.31px;top:533px;font-size:12.8px;line-height:18px;color:#62718f;"><i style="margin:0 0.49px">0</i><i style="margin:0 -0.19px">.</i><i style="margin:0 0.49px">0</i><i style="margin:0 0.49px">0</i></span>
<span class="t n" style="left:1590.01px;top:533px;font-size:12.8px;line-height:18px;color:#62718f;"><i style="margin:0 0.49px">0</i><i style="margin:0 -0.19px">.</i><i style="margin:0 0.49px">0</i><i style="margin:0 0.49px">0</i></span>
<span class="t n" style="left:1659.01px;top:533px;font-size:12.8px;line-height:18px;color:#62718f;"><i style="margin:0 0.49px">0</i><i style="margin:0 -0.19px">.</i><i style="margin:0 0.49px">0</i><i style="margin:0 0.49px">0</i></span>
<span class="t n" style="left:1730.01px;top:533px;font-size:12.8px;line-height:18px;color:#62718f;"><i style="margin:0 -1.51px">1</i><i style="margin:0 -0.06px">0</i><i style="margin:0 -0.40px">.</i><i style="margin:0 -1.51px">1</i><i style="margin:0 -0.06px">7</i></span>
<span class="t n" style="left:1803.30px;top:533px;font-size:12.8px;line-height:18px;color:#62718f;"><i style="margin:0 -1.50px">1</i><i style="margin:0 -0.40px">.</i><i style="margin:0 -0.03px">8</i><i style="margin:0 -0.03px">3</i></span>
<span class="t n" style="left:363.30px;top:616px;font-size:12.8px;line-height:18px;color:#62718f;"><i style="margin:0 0.00px">2</i></span>
<span class="t" style="left:391.50px;top:616px;font-size:13.45px;line-height:18px;color:#62718f;letter-spacing:0.616px;">Shannen</span>
<span class="t" style="left:526.80px;top:616px;font-size:12.21px;line-height:18px;color:#62718f;letter-spacing:0.008px;">FACTURA</span>
<span class="t" style="left:526.80px;top:638px;font-size:11.96px;line-height:18px;color:#62718f;transform:scaleX(0.9940);transform-origin:0 50%;">ELECTRÓNICA</span>
<span class="t n" style="left:629.03px;top:616px;font-size:12.6px;line-height:18px;color:#62718f;"><i style="margin:0 -0.63px">F</i><i style="margin:0 0.08px">0</i><i style="margin:0 0.08px">0</i><i style="margin:0 -1.41px">1</i></span>
<span class="t n" style="left:676.31px;top:616px;font-size:12.8px;line-height:18px;color:#62718f;"><i style="margin:0 0.89px">6</i><i style="margin:0 0.89px">5</i></span>
<span class="t n" style="left:744.76px;top:616px;font-size:12.8px;line-height:18px;color:#62718f;"><i style="margin:0 0.54px">2</i><i style="margin:0 0.54px">0</i><i style="margin:0 0.54px">2</i><i style="margin:0 0.54px">2</i><i style="margin:0 0.49px">-</i></span>
<span class="t n" style="left:746.64px;top:638px;font-size:12.8px;line-height:18px;color:#62718f;"><i style="margin:0 -1.34px">1</i><i style="margin:0 0.24px">2</i><i style="margin:0 0.30px">-</i><i style="margin:0 -1.34px">1</i><i style="margin:0 0.24px">2</i></span>
<span class="t n" style="left:812.07px;top:616px;font-size:12.8px;line-height:18px;color:#62718f;"><i style="margin:0 0.53px">2</i><i style="margin:0 0.53px">0</i><i style="margin:0 0.53px">2</i><i style="margin:0 0.53px">2</i><i style="margin:0 0.49px">-</i><i style="margin:0 -1.17px">1</i><i style="margin:0 0.53px">2</i><i style="margin:0 0.49px">-</i><i style="margin:0 -1.17px">1</i><i style="margin:0 0.53px">2</i></span>
<span class="t" style="left:1119.50px;top:616px;font-size:12.32px;line-height:18px;color:#62718f;">DIGITAL</span>
<span class="t" style="left:1119.50px;top:638px;font-size:12.29px;line-height:18px;color:#62718f;letter-spacing:0.006px;">BUHO</span>
<span class="t" style="left:1119.50px;top:660px;font-size:11.96px;line-height:18px;color:#62718f;transform:scaleX(0.9844);transform-origin:0 50%;">S.A.C.</span>
<span class="t n" style="left:1119.18px;top:683px;font-size:10.2px;line-height:18px;color:#62718f;"><i style="margin:0 0.32px">2</i><i style="margin:0 0.32px">0</i><i style="margin:0 0.32px">6</i><i style="margin:0 0.32px">0</i><i style="margin:0 0.32px">3</i><i style="margin:0 0.32px">6</i><i style="margin:0 0.32px">8</i><i style="margin:0 0.32px">4</i><i style="margin:0 0.32px">2</i><i style="margin:0 0.32px">9</i><i style="margin:0 -0.99px">1</i></span>
<div class="b" style="left:1224px;top:614px;width:31px;height:25.1px;background:#0075ff;border-radius:3.5px;box-shadow:0 1px 1.5px rgba(60,40,160,.28);transform:translateY(0.1px);"></div>
<svg class="b" style="left:1232.9px;top:620.7px;" width="13.1" height="11.64" viewBox="0 0 576 512"><path fill="#fff" d="M572.52 241.4C518.29 135.59 410.93 64 288 64S57.68 135.64 3.48 241.41a32.35 32.35 0 0 0 0 29.19C57.71 376.41 165.07 448 288 448s230.32-71.64 284.52-177.41a32.35 32.35 0 0 0 0-29.19zM288 400a144 144 0 1 1 144-144 143.93 143.93 0 0 1-144 144zm0-240a95.31 95.31 0 0 0-25.31 3.79 47.85 47.85 0 0 1-66.9 66.9A95.78 95.78 0 1 0 288 160z"/></svg>
<span class="t" style="left:1288.50px;top:616px;font-size:13.45px;line-height:18px;color:#62718f;letter-spacing:0.960px;">Aceptado</span>
<span class="t" style="left:1368.30px;top:616px;font-size:11.96px;line-height:18px;color:#62718f;transform:scaleX(0.9562);transform-origin:0 50%;">PEN</span>
<span class="t n" style="left:1505.31px;top:616px;font-size:12.8px;line-height:18px;color:#62718f;"><i style="margin:0 0.49px">0</i><i style="margin:0 -0.19px">.</i><i style="margin:0 0.49px">0</i><i style="margin:0 0.49px">0</i></span>
<span class="t n" style="left:1590.01px;top:616px;font-size:12.8px;line-height:18px;color:#62718f;"><i style="margin:0 0.49px">0</i><i style="margin:0 -0.19px">.</i><i style="margin:0 0.49px">0</i><i style="margin:0 0.49px">0</i></span>
<span class="t n" style="left:1659.01px;top:616px;font-size:12.8px;line-height:18px;color:#62718f;"><i style="margin:0 0.49px">0</i><i style="margin:0 -0.19px">.</i><i style="margin:0 0.49px">0</i><i style="margin:0 0.49px">0</i></span>
<span class="t n" style="left:1729.91px;top:616px;font-size:12.8px;line-height:18px;color:#62718f;"><i style="margin:0 -1.41px">1</i><i style="margin:0 0.11px">2</i><i style="margin:0 -0.34px">.</i><i style="margin:0 0.11px">0</i><i style="margin:0 0.11px">0</i></span>
<span class="t n" style="left:1801.46px;top:616px;font-size:12.8px;line-height:18px;color:#62718f;"><i style="margin:0 0.34px">2</i><i style="margin:0 -0.25px">.</i><i style="margin:0 -1.28px">1</i><i style="margin:0 0.34px">6</i></span>
<span class="t n" style="left:363.30px;top:722px;font-size:12.8px;line-height:18px;color:#62718f;"><i style="margin:0 0.00px">3</i></span>
<span class="t" style="left:391.50px;top:722px;font-size:13.45px;line-height:18px;color:#62718f;letter-spacing:0.616px;">Shannen</span>
<span class="t" style="left:526.80px;top:722px;font-size:12.21px;line-height:18px;color:#62718f;letter-spacing:0.008px;">FACTURA</span>
<span class="t" style="left:526.80px;top:744px;font-size:11.96px;line-height:18px;color:#62718f;transform:scaleX(0.9940);transform-origin:0 50%;">ELECTRÓNICA</span>
<span class="t n" style="left:629.03px;top:722px;font-size:12.6px;line-height:18px;color:#62718f;"><i style="margin:0 -0.63px">F</i><i style="margin:0 0.08px">0</i><i style="margin:0 0.08px">0</i><i style="margin:0 -1.41px">1</i></span>
<span class="t n" style="left:676.31px;top:722px;font-size:12.8px;line-height:18px;color:#62718f;"><i style="margin:0 0.89px">6</i><i style="margin:0 0.89px">4</i></span>
<span class="t n" style="left:744.76px;top:722px;font-size:12.8px;line-height:18px;color:#62718f;"><i style="margin:0 0.54px">2</i><i style="margin:0 0.54px">0</i><i style="margin:0 0.54px">2</i><i style="margin:0 0.54px">2</i><i style="margin:0 0.49px">-</i></span>
<span class="t n" style="left:746.64px;top:744px;font-size:12.8px;line-height:18px;color:#62718f;"><i style="margin:0 -1.34px">1</i><i style="margin:0 0.24px">2</i><i style="margin:0 0.30px">-</i><i style="margin:0 -1.34px">1</i><i style="margin:0 0.24px">2</i></span>
<span class="t n" style="left:812.07px;top:722px;font-size:12.8px;line-height:18px;color:#62718f;"><i style="margin:0 0.53px">2</i><i style="margin:0 0.53px">0</i><i style="margin:0 0.53px">2</i><i style="margin:0 0.53px">2</i><i style="margin:0 0.49px">-</i><i style="margin:0 -1.17px">1</i><i style="margin:0 0.53px">2</i><i style="margin:0 0.49px">-</i><i style="margin:0 -1.17px">1</i><i style="margin:0 0.53px">2</i></span>
<span class="t" style="left:1119.50px;top:722px;font-size:13.45px;line-height:18px;color:#62718f;letter-spacing:0.283px;">Lucero</span>
<span class="t" style="left:1119.50px;top:744px;font-size:13.45px;line-height:18px;color:#62718f;letter-spacing:0.534px;">Prueba</span>
<span class="t n" style="left:1119.07px;top:767px;font-size:10.2px;line-height:18px;color:#62718f;"><i style="margin:0 0.43px">2</i><i style="margin:0 0.43px">0</i><i style="margin:0 0.43px">6</i><i style="margin:0 0.43px">0</i><i style="margin:0 0.43px">0</i><i style="margin:0 0.43px">3</i><i style="margin:0 0.43px">9</i><i style="margin:0 0.43px">4</i><i style="margin:0 0.43px">6</i><i style="margin:0 0.43px">9</i><i style="margin:0 0.43px">8</i></span>
<div class="b" style="left:1224px;top:719px;width:31px;height:25.1px;background:#0075ff;border-radius:3.5px;box-shadow:0 1px 1.5px rgba(60,40,160,.28);transform:translateY(0.9px);"></div>
<svg class="b" style="left:1232.9px;top:726.5px;" width="13.1" height="11.64" viewBox="0 0 576 512"><path fill="#fff" d="M572.52 241.4C518.29 135.59 410.93 64 288 64S57.68 135.64 3.48 241.41a32.35 32.35 0 0 0 0 29.19C57.71 376.41 165.07 448 288 448s230.32-71.64 284.52-177.41a32.35 32.35 0 0 0 0-29.19zM288 400a144 144 0 1 1 144-144 143.93 143.93 0 0 1-144 144zm0-240a95.31 95.31 0 0 0-25.31 3.79 47.85 47.85 0 0 1-66.9 66.9A95.78 95.78 0 1 0 288 160z"/></svg>
<span class="t" style="left:1288.50px;top:722px;font-size:13.45px;line-height:18px;color:#62718f;letter-spacing:0.960px;">Aceptado</span>
<span class="t" style="left:1368.30px;top:722px;font-size:11.96px;line-height:18px;color:#62718f;transform:scaleX(0.9562);transform-origin:0 50%;">PEN</span>
<span class="t n" style="left:1505.31px;top:722px;font-size:12.8px;line-height:18px;color:#62718f;"><i style="margin:0 0.49px">0</i><i style="margin:0 -0.19px">.</i><i style="margin:0 0.49px">0</i><i style="margin:0 0.49px">0</i></span>
<span class="t n" style="left:1590.01px;top:722px;font-size:12.8px;line-height:18px;color:#62718f;"><i style="margin:0 0.49px">0</i><i style="margin:0 -0.19px">.</i><i style="margin:0 0.49px">0</i><i style="margin:0 0.49px">0</i></span>
<span class="t n" style="left:1659.01px;top:722px;font-size:12.8px;line-height:18px;color:#62718f;"><i style="margin:0 0.49px">0</i><i style="margin:0 -0.19px">.</i><i style="margin:0 0.49px">0</i><i style="margin:0 0.49px">0</i></span>
<span class="t n" style="left:1730.01px;top:722px;font-size:12.8px;line-height:18px;color:#62718f;"><i style="margin:0 -1.51px">1</i><i style="margin:0 -0.06px">0</i><i style="margin:0 -0.40px">.</i><i style="margin:0 -1.51px">1</i><i style="margin:0 -0.06px">7</i></span>
<span class="t n" style="left:1803.30px;top:722px;font-size:12.8px;line-height:18px;color:#62718f;"><i style="margin:0 -1.50px">1</i><i style="margin:0 -0.40px">.</i><i style="margin:0 -0.03px">8</i><i style="margin:0 -0.03px">3</i></span>
<span class="t n" style="left:363.30px;top:806px;font-size:12.8px;line-height:18px;color:#62718f;"><i style="margin:0 0.00px">4</i></span>
<span class="t" style="left:391.50px;top:806px;font-size:13.45px;line-height:18px;color:#62718f;letter-spacing:0.616px;">Shannen</span>
<span class="t" style="left:526.80px;top:806px;font-size:12.21px;line-height:18px;color:#62718f;letter-spacing:0.008px;">FACTURA</span>
<span class="t" style="left:526.80px;top:828px;font-size:11.96px;line-height:18px;color:#62718f;transform:scaleX(0.9940);transform-origin:0 50%;">ELECTRÓNICA</span>
<span class="t n" style="left:629.03px;top:806px;font-size:12.6px;line-height:18px;color:#62718f;"><i style="margin:0 -0.63px">F</i><i style="margin:0 0.08px">0</i><i style="margin:0 0.08px">0</i><i style="margin:0 -1.41px">1</i></span>
<span class="t n" style="left:676.31px;top:806px;font-size:12.8px;line-height:18px;color:#62718f;"><i style="margin:0 0.89px">6</i><i style="margin:0 0.89px">3</i></span>
<span class="t n" style="left:744.76px;top:806px;font-size:12.8px;line-height:18px;color:#62718f;"><i style="margin:0 0.54px">2</i><i style="margin:0 0.54px">0</i><i style="margin:0 0.54px">2</i><i style="margin:0 0.54px">2</i><i style="margin:0 0.49px">-</i></span>
<span class="t n" style="left:746.64px;top:828px;font-size:12.8px;line-height:18px;color:#62718f;"><i style="margin:0 -1.34px">1</i><i style="margin:0 0.24px">2</i><i style="margin:0 0.30px">-</i><i style="margin:0 -1.34px">1</i><i style="margin:0 0.24px">2</i></span>
<span class="t n" style="left:812.07px;top:806px;font-size:12.8px;line-height:18px;color:#62718f;"><i style="margin:0 0.53px">2</i><i style="margin:0 0.53px">0</i><i style="margin:0 0.53px">2</i><i style="margin:0 0.53px">2</i><i style="margin:0 0.49px">-</i><i style="margin:0 -1.17px">1</i><i style="margin:0 0.53px">2</i><i style="margin:0 0.49px">-</i><i style="margin:0 -1.17px">1</i><i style="margin:0 0.53px">2</i></span>
<span class="t" style="left:1119.50px;top:806px;font-size:13.45px;line-height:18px;color:#62718f;letter-spacing:0.283px;">Lucero</span>
<span class="t" style="left:1119.50px;top:828px;font-size:13.45px;line-height:18px;color:#62718f;letter-spacing:0.534px;">Prueba</span>
<span class="t n" style="left:1119.07px;top:851px;font-size:10.2px;line-height:18px;color:#62718f;"><i style="margin:0 0.43px">2</i><i style="margin:0 0.43px">0</i><i style="margin:0 0.43px">6</i><i style="margin:0 0.43px">0</i><i style="margin:0 0.43px">0</i><i style="margin:0 0.43px">3</i><i style="margin:0 0.43px">9</i><i style="margin:0 0.43px">4</i><i style="margin:0 0.43px">6</i><i style="margin:0 0.43px">9</i><i style="margin:0 0.43px">8</i></span>
<div class="b" style="left:1224px;top:803px;width:31px;height:25.1px;background:#0075ff;border-radius:3.5px;box-shadow:0 1px 1.5px rgba(60,40,160,.28);transform:translateY(0.5px);"></div>
<svg class="b" style="left:1232.9px;top:810.1px;" width="13.1" height="11.64" viewBox="0 0 576 512"><path fill="#fff" d="M572.52 241.4C518.29 135.59 410.93 64 288 64S57.68 135.64 3.48 241.41a32.35 32.35 0 0 0 0 29.19C57.71 376.41 165.07 448 288 448s230.32-71.64 284.52-177.41a32.35 32.35 0 0 0 0-29.19zM288 400a144 144 0 1 1 144-144 143.93 143.93 0 0 1-144 144zm0-240a95.31 95.31 0 0 0-25.31 3.79 47.85 47.85 0 0 1-66.9 66.9A95.78 95.78 0 1 0 288 160z"/></svg>
<span class="t" style="left:1288.50px;top:806px;font-size:13.45px;line-height:18px;color:#62718f;letter-spacing:0.960px;">Aceptado</span>
<span class="t" style="left:1368.30px;top:806px;font-size:11.96px;line-height:18px;color:#62718f;transform:scaleX(0.9562);transform-origin:0 50%;">PEN</span>
<span class="t n" style="left:1505.31px;top:806px;font-size:12.8px;line-height:18px;color:#62718f;"><i style="margin:0 0.49px">0</i><i style="margin:0 -0.19px">.</i><i style="margin:0 0.49px">0</i><i style="margin:0 0.49px">0</i></span>
<span class="t n" style="left:1590.01px;top:806px;font-size:12.8px;line-height:18px;color:#62718f;"><i style="margin:0 0.49px">0</i><i style="margin:0 -0.19px">.</i><i style="margin:0 0.49px">0</i><i style="margin:0 0.49px">0</i></span>
<span class="t n" style="left:1659.01px;top:806px;font-size:12.8px;line-height:18px;color:#62718f;"><i style="margin:0 0.49px">0</i><i style="margin:0 -0.19px">.</i><i style="margin:0 0.49px">0</i><i style="margin:0 0.49px">0</i></span>
<span class="t n" style="left:1730.13px;top:806px;font-size:12.8px;line-height:18px;color:#62718f;"><i style="margin:0 -1.63px">1</i><i style="margin:0 -0.49px">.</i><i style="margin:0 -0.26px">2</i><i style="margin:0 -0.26px">7</i></span>
<span class="t n" style="left:1801.41px;top:806px;font-size:12.8px;line-height:18px;color:#62718f;"><i style="margin:0 0.39px">0</i><i style="margin:0 -0.23px">.</i><i style="margin:0 0.39px">2</i><i style="margin:0 0.39px">3</i></span>
<div class="b" style="left:0px;top:866px;width:1900px;height:22px;background:#fff;"></div>
<div class="b" style="left:1898px;top:0px;width:2px;height:866px;background:#f0f0f1;"></div>
</body></html>
